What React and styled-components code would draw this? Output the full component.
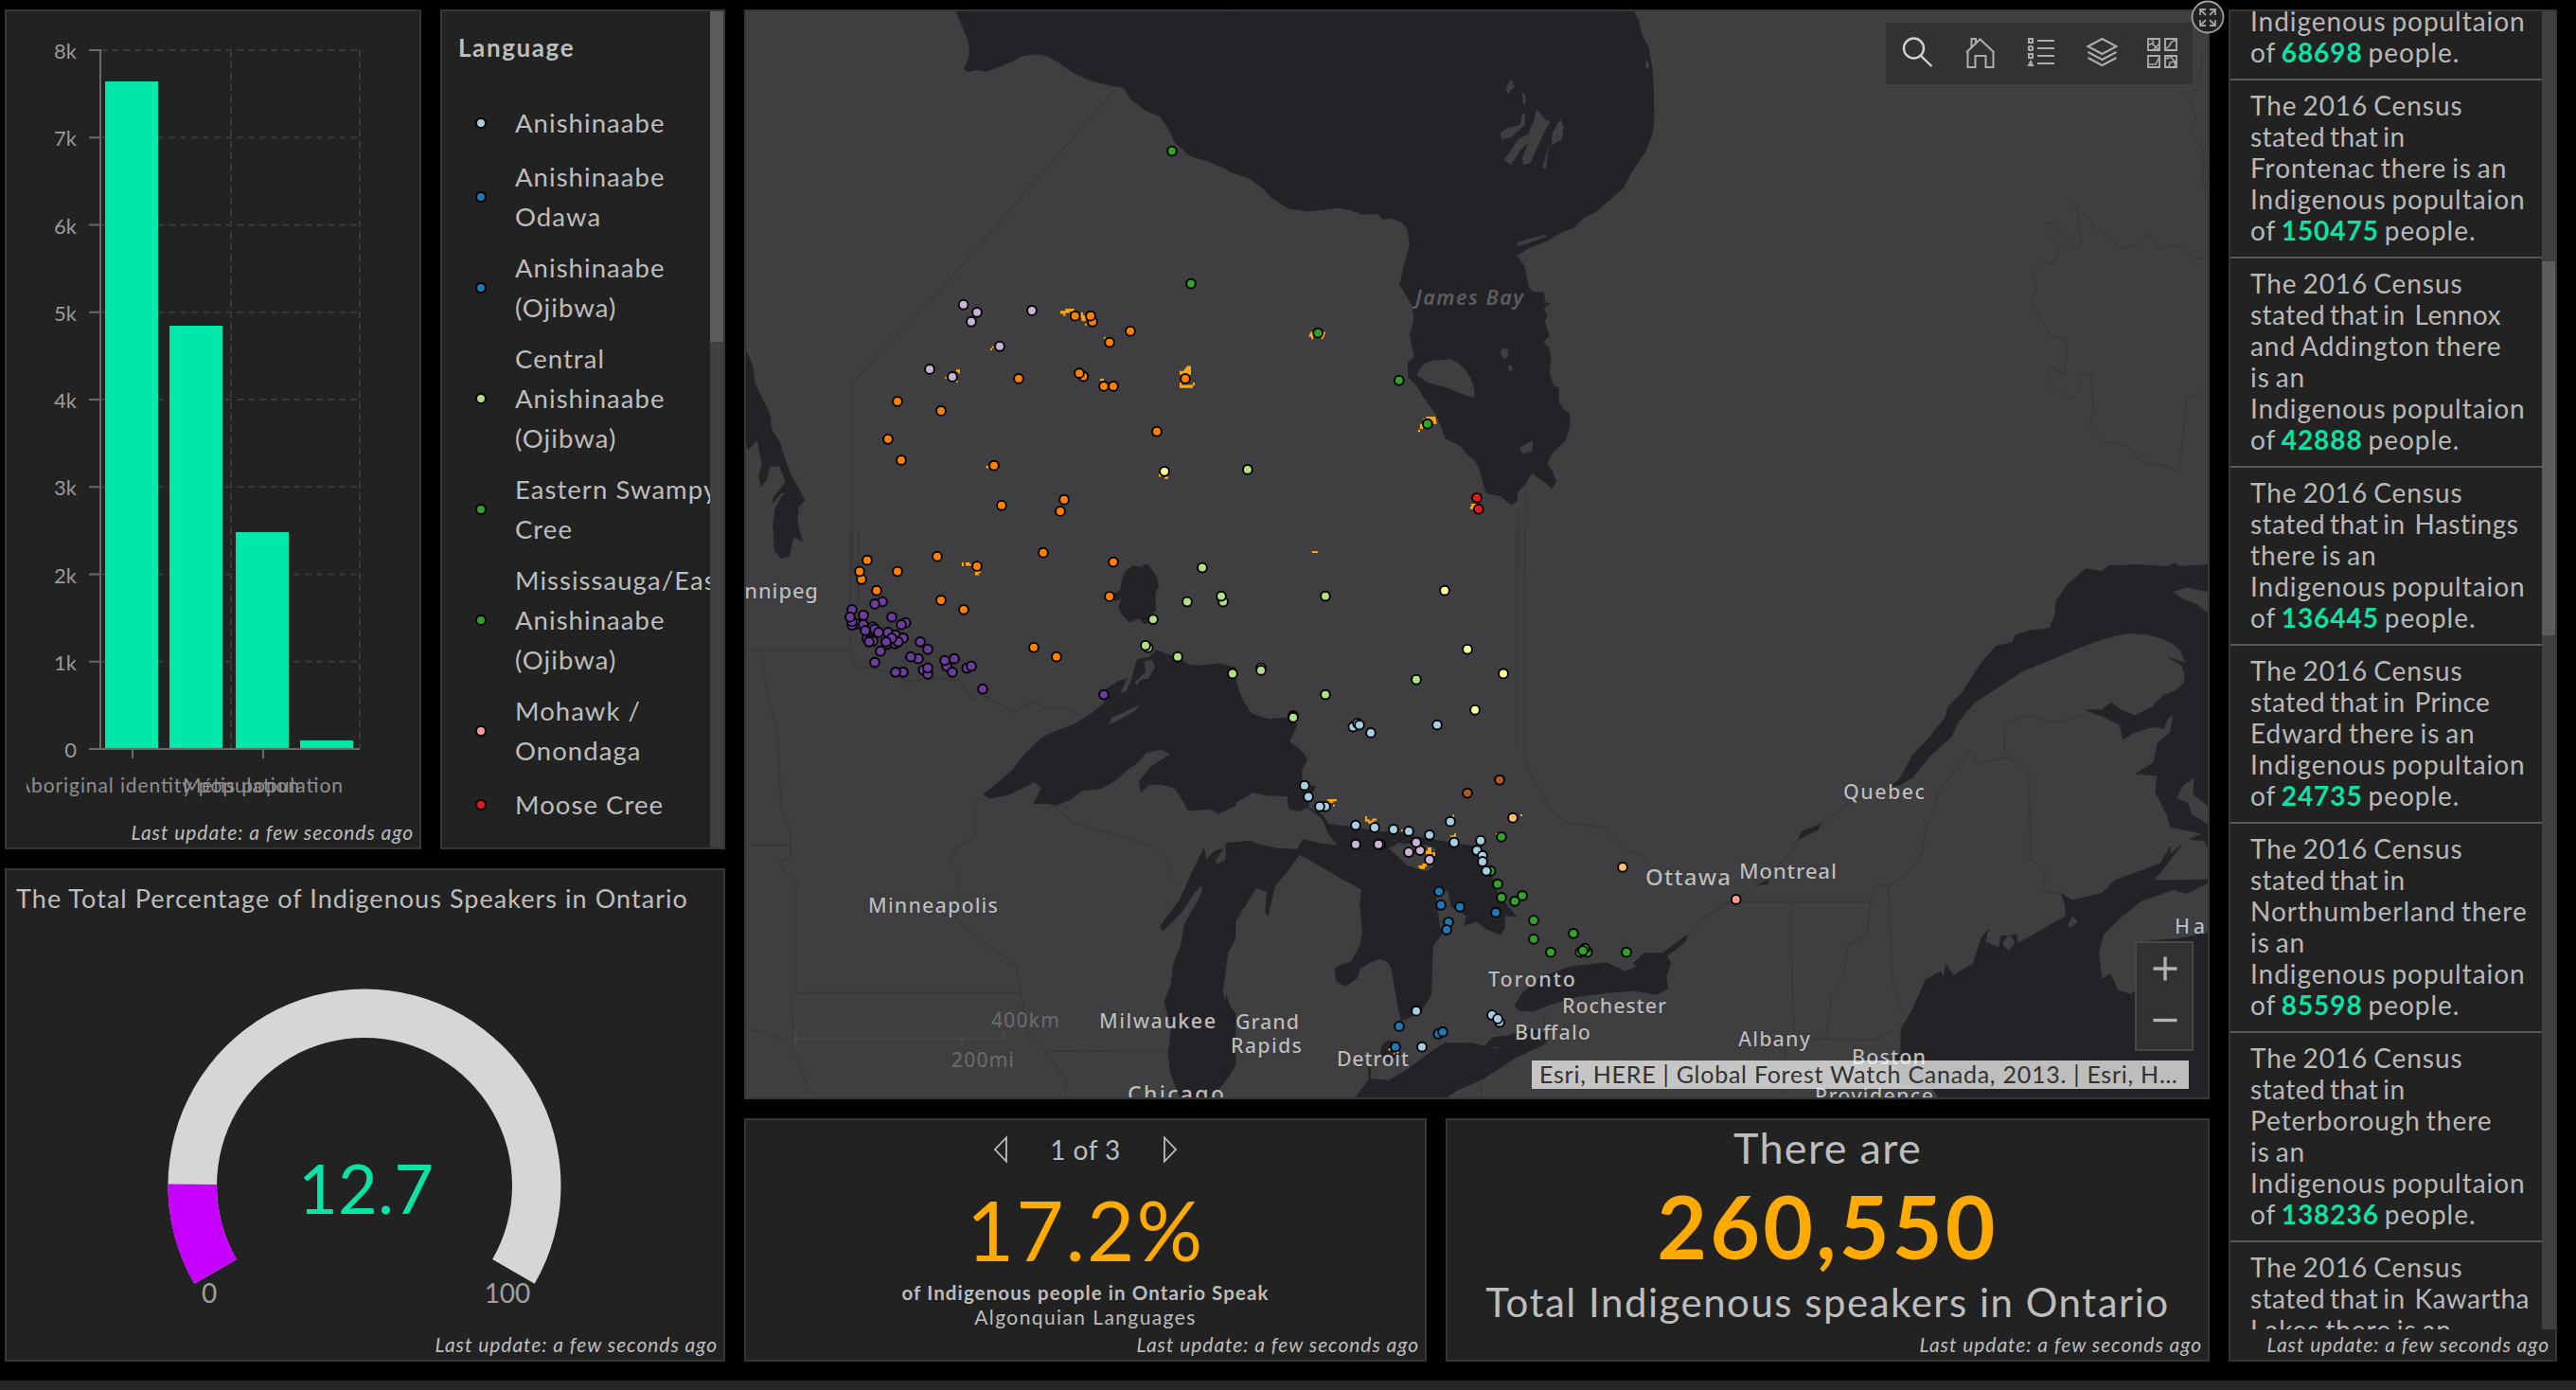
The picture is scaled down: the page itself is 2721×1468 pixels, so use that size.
import React from "react";
import styled, { createGlobalStyle } from "styled-components";

const Global = createGlobalStyle`
  * { box-sizing: border-box; }
  body { margin: 0; background: #000; color: #bdbdbd; font-family: Lato, "Open Sans", sans-serif; overflow: hidden; }
  p, h2 { margin: 0; font-weight: 400; }
`;

const Page = styled.div`
  width: 2721px;
  height: 1468px;
  display: flex;
  flex-direction: column;
  background: #000;
`;
const Board = styled.main`
  height: 1458px;
  padding: 10px 20px 20px 5px;
  display: grid;
  grid-template-columns: 761px 1548px 347px;
  gap: 20px;
`;
const BottomStrip = styled.footer`
  flex: 1;
  background: #262626;
`;
const Column = styled.div`
  display: grid;
  grid-template-rows: ${(p) => p.$rows};
  gap: 20px;
  min-height: 0;
`;
const Row = styled.div`
  display: grid;
  grid-template-columns: ${(p) => p.$cols};
  gap: ${(p) => p.$gap || 20}px;
  min-height: 0;
`;
const Panel = styled.section`
  position: relative;
  background: #222;
  border: 2px solid #363636;
  display: flex;
  flex-direction: column;
  min-width: 0;
  min-height: 0;
`;
const Updated = styled.p`
  margin-top: auto;
  padding-right: 6px;
  height: 32px;
  line-height: 32px;
  font-size: 21px;
  font-style: italic;
  letter-spacing: 0.95px;
  text-align: right;
  white-space: nowrap;
  color: #bdbdbd;
`;
const Drawing = styled.svg`
  display: block;
  flex: none;
  font-family: Lato, "Open Sans", sans-serif;
`;

/* ---------- bar chart ---------- */
const TICKS = ["0", "1k", "2k", "3k", "4k", "5k", "6k", "7k", "8k"];
const BARS = [
  [111, 86],
  [179, 344],
  [249, 562],
  [317, 782],
];
const tickY = (i) => 791 - i * 92.25;

function BarChart() {
  return (
    <Drawing width="436" height="850" viewBox="7 12 436 850">
      <g stroke="#393939" strokeWidth="2" strokeDasharray="7 5">
        {TICKS.slice(1).map((t, i) => (
          <line key={t} x1="106" x2="380" y1={tickY(i + 1)} y2={tickY(i + 1)} />
        ))}
        <line x1="244" x2="244" y1="53" y2="791" />
        <line x1="380" x2="380" y1="53" y2="791" />
      </g>
      {BARS.map(([x, y]) => (
        <rect key={x} x={x} y={y} width="56" height={791 - y} fill="#00e8a9" />
      ))}
      <path
        d="M106 52V792M94 791H380M140 791V801M278 791V801"
        stroke="#6a6a6a"
        strokeWidth="2"
        fill="none"
      />
      {TICKS.map((t, i) => (
        <g key={t}>
          <line x1="94" x2="106" y1={tickY(i)} y2={tickY(i)} stroke="#6a6a6a" strokeWidth="2" />
          <text x="81" y={tickY(i) + 9} textAnchor="end" fontSize="22" fill="#9a9a9a">
            {t}
          </text>
        </g>
      ))}
      <clipPath id="axis-clip">
        <rect x="28" y="810" width="400" height="40" />
      </clipPath>
      <g fontSize="21" fill="#8e8e8e" clipPath="url(#axis-clip)">
        <text x="18" y="837" textLength="298">Aboriginal identity population</text>
        <text x="193" y="837" textLength="169">Métis population</text>
      </g>
    </Drawing>
  );
}

/* ---------- legend ---------- */
const LANGUAGES = [
  ["#a6cee3", ["Anishinaabe"]],
  ["#1f78b4", ["Anishinaabe", "Odawa"]],
  ["#1f78b4", ["Anishinaabe", "(Ojibwa)"]],
  ["#b2df8a", ["Central", "Anishinaabe", "(Ojibwa)"]],
  ["#33a02c", ["Eastern Swampy", "Cree"]],
  ["#33a02c", ["Mississauga/Eastern", "Anishinaabe", "(Ojibwa)"]],
  ["#fb9a99", ["Mohawk /", "Onondaga"]],
  ["#e31a1c", ["Moose Cree"]],
];
const LegendBody = styled.div`
  display: flex;
  height: 100%;
`;
const LegendList = styled.div`
  width: 283px;
  overflow: hidden;
  display: flex;
  flex-direction: column;
  gap: 12px;
  padding: 18px 0 0 17px;
`;
const LegendTitle = styled.h2`
  height: 64px;
  line-height: 41px;
  font-size: 26px;
  font-weight: 700;
  letter-spacing: 1.6px;
`;
const LegendItem = styled.div`
  display: flex;
  align-items: center;
  min-height: 48px;
  flex: none;
  padding-left: 18px;
  gap: 30px;
`;
const Dot = styled.span`
  width: 12px;
  height: 12px;
  flex: none;
  border: 2px solid #000;
  border-radius: 50%;
  background: ${(p) => p.$color};
`;
const LegendText = styled.div`
  font-size: 27.5px;
  line-height: 42px;
  letter-spacing: 1.05px;
  white-space: nowrap;
`;
const Track = styled.div`
  width: 14px;
  flex: none;
  padding-top: ${(p) => p.$offset}px;
  background: #404040;
`;
const Thumb = styled.div`
  height: ${(p) => p.$size}px;
  background: #5c5c5c;
`;

/* ---------- gauge ---------- */
const GaugeTitle = styled.h2`
  padding: 10px 0 0 10px;
  height: 66px;
  line-height: 40px;
  font-size: 27px;
  letter-spacing: 1.05px;
  white-space: nowrap;
`;
const arc = (from, to) => {
  const pt = (r, deg) => {
    const a = ((180 + deg) * Math.PI) / 180;
    return `${385 + r * Math.cos(a)} ${1252 + r * Math.sin(a)}`;
  };
  const big = to - from > 180 ? 1 : 0;
  return `M${pt(207.5, from)}A207.5 207.5 0 ${big} 1 ${pt(207.5, to)}L${pt(156, to)}A156 156 0 ${big} 0 ${pt(156, from)}Z`;
};
function Gauge() {
  return (
    <Drawing width="757" height="410" viewBox="7 985 757 410">
      <path d={arc(-30, 210)} fill="#d6d6d6" />
      <path d={arc(-30, 0.4)} fill="#c500ff" />
      <text x="315" y="1282" fontSize="72" textLength="143" fill="#0be3a5">12.7</text>
      <text x="221" y="1376" fontSize="28" textAnchor="middle" fill="#a0a0a0">0</text>
      <text x="536" y="1376" fontSize="28" textAnchor="middle" fill="#a0a0a0">100</text>
    </Drawing>
  );
}

/* ---------- map ---------- */
const C = {
  w: "#cab2d6", o: "#ff7f00", g: "#33a02c", y: "#ffff99", l: "#b2df8a", p: "#6a3d9a",
  a: "#a6cee3", b: "#1f78b4", n: "#b15928", t: "#fdbf6f", r: "#e31a1c", k: "#fb9a99",
};

/* Each sheet has its own local grid; ox/oy is its origin and kx/ky its grid units per pixel. */
const SHEETS = [
  {
    id: "northwest", ox: 780, oy: 0, kx: 3, ky: 2.6133,
    water: [
      "M690 30L712 78L728 112Q736 140 730 160L716 190L724 198L755 192L785 197L820 186L870 168L900 154Q940 145 980 155L1020 175L1060 200L1110 220L1190 238L1218 240L1245 275L1290 305L1335 320L1360 350L1385 395L1430 430L1490 445L1560 472L1575 476V28Z",
      "M20 960L45 1010L52 1060L75 1100L98 1140L105 1185L130 1220L148 1270L165 1310L210 1380L190 1400L186 1440L202 1495L175 1480L160 1535L135 1541L115 1520L110 1450L118 1400L138 1370L152 1360L135 1360L108 1390L110 1375L150 1330L130 1286L100 1286L88 1325L72 1342L65 1315L75 1280L60 1215L30 1240L20 1205Z",
    ],
    land: [],
    border: ["M1195 245L900 540L630 810L360 1055V1580"],
    fire: "M1020 858h16v-6h28v8h-14v4h-14v8h-6v-6h-10zM1086 862h6v8h8v16h-12v-8h-4zM1098 893h6v5h-6zM1398 1024h12l12-14h12v24h-36zM1398 1056h6v6h36v-6h6v8h-6v7h-42zM1146 1045h12v6h-12zM690 1020h12v10h-6v-4h-6zM654 1040h5v5h-5zM690 1051h5v5h-5zM798 961h6v6h-6zM804 956h5v5h-5zM1158 930h5v5h-5zM785 1286h7v6h-7zM1332 1308h8v8h-8zM1350 1316h12v6h-12z",
    dots: {
      g: [1374,417,1434,783],
      w: [713,841,756,862,738,888,930,857,828,956,606,1019,678,1040],
      o: [1067,872,1122,888,1116,872,1242,914,1176,945,888,1045,1093,1039,1080,1030,1158,1066,1188,1066,1416,1045,504,1108,642,1134,474,1212,516,1270,1326,1191,810,1285,834,1395,1032,1379,1020,1411],
      y: [1350,1301],
    },
  },
  {
    id: "james-bay", ox: 1300, oy: 0, kx: 2.8, ky: 2.6133,
    water: [
      "M-8 28H1190L1205 55L1215 95L1235 130L1245 180L1250 240L1252 330L1245 375L1225 420L1185 475L1160 520L1110 560L1080 585L1045 600L1015 628L980 640L935 665L880 685L845 705L868 735L880 790L890 805L925 808L930 835L943 839L925 850L935 870L928 890L942 925L925 945L940 960L947 990L942 1030L955 1065L970 1070V1110L985 1130L1000 1140L1003 1175L990 1215L950 1250L935 1280L950 1300L962 1330L950 1348L935 1335L890 1305L870 1335L848 1360L845 1385L830 1393L800 1370L755 1360L735 1290L720 1270L695 1250L680 1230L635 1210L620 1170L605 1140L570 1095L555 1070L525 1040V1000L543 985L530 925L543 880L535 840L500 785L515 725L530 675L522 628L505 613L475 602L450 605L435 590L395 592L355 580L320 573L230 583L170 575L120 545L90 515L50 490L-8 472Z",
    ],
    land: [
      "M550 1035Q565 1000 600 995L650 992Q690 1005 710 1045Q722 1070 722 1098L690 1090L640 1070L580 1055Z",
      "M797 970l10-10l14 4v18l-12 10l-8-10zM820 1008l10 0l6 12l-14 6zM855 1235L893 1215V1245L862 1252Z",
      "M828 217L840 240L830 246L820 262L814 245ZM862 255L872 262V290L864 282ZM797 368L815 355L855 345L864 312L870 312V345L830 378L800 385Z",
      "M905 303L930 330L945 335L925 370L905 410L885 450L865 455L862 435L880 395L860 410L830 455L808 443L850 385L880 370L895 335ZM975 328L985 350L980 385L948 402L952 365ZM941 400L933 465L922 462ZM845 670L930 647L935 653L850 680ZM1228 165L1238 175L1236 192L1228 185Z",
    ],
    border: ["M872 1330V1580", "M850 1400V1580"],
    fire: "M230 930l6-14h8v20h-6v-6zM274 916h6l-3 12l-6 8h-4zM566 1156h12v-6h27l5 20h-12v-8h-20zM554 1186h6v-16h8v14h-8v8h-6zM711 1390h16v10h-10v5h-9v-6h3zM241 1521h17v5h-17z",
    dots: { g: [258,919,498,1050,582,1170], l: [50,1296], r: [728,1374,733,1405] },
  },
  {
    id: "quebec-north", ox: 1840, oy: 0, kx: 3, ky: 3,
    water: [], land: [], fire: "", dots: {},
    border: [
      "M1050 640L1065 680L1075 780L1060 790L1020 750L985 705L960 705L990 760L1010 790L985 840L965 830L920 860L935 920L912 950L945 1010L980 1065L1025 1080L1030 1130L1020 1185L980 1160L970 1190L980 1225L1045 1262L1065 1240L1080 1195L1105 1185L1115 1300L1100 1350L1130 1380L1155 1400L1220 1410L1260 1460L1340 1475L1385 1495L1395 1400L1410 1260L1480 1240",
      "M1085 670L1120 720L1170 750L1200 790L1250 775L1285 740L1330 790L1380 775L1440 820L1475 815",
      "M1460 170L1450 270L1415 310L1440 370L1420 420L1465 475L1460 560L1470 620",
    ],
  },
  {
    id: "superior", ox: 780, oy: 560, kx: 3, ky: 2.529,
    water: [
      "M1225 110L1250 95L1285 100L1280 92L1300 94L1325 125L1332 150L1320 170L1322 215L1300 225L1310 245L1285 250L1270 235L1240 245L1215 225L1205 205L1215 180L1195 188L1175 180L1210 160L1218 130Z",
      "M775 705L800 690L870 640L910 595L960 555L1010 535L1060 520L1110 495L1160 462L1165 425L1200 405L1230 397L1265 345L1300 340L1325 320L1370 335L1400 345L1430 360L1470 362L1520 356L1575 366V735L1520 757L1500 745L1425 748L1400 710L1385 690L1340 678L1300 680L1275 700L1270 670L1310 630L1370 598L1340 585L1290 595L1265 620L1240 635L1200 665L1150 690L1090 695L1050 720L1005 735L985 730L935 730L960 690L940 672L910 685L850 708L795 716Z",
      "M1475 850L1440 910L1400 985L1335 1060L1345 1070L1400 1025L1440 975L1462 950L1473 955L1460 985L1415 1050L1402 1110L1378 1160L1372 1210L1350 1260L1372 1330L1362 1400L1370 1450L1400 1516H1500L1540 1475L1575 1430V1290L1545 1260L1533 1235L1540 1200L1550 1130L1575 1090V858L1535 885L1515 893L1512 880L1535 852L1510 856L1482 880Z",
    ],
    land: ["M1170 520L1185 500L1270 467L1260 480L1210 505Z", "M1210 435L1232 395L1250 350L1262 345L1245 400L1230 430Z", "M1255 405L1290 380L1285 350L1310 345L1320 365L1300 395L1275 400L1262 415Z"],
    border: [
      "M355 0V320H20M380 0V200", "M75 330L90 440L125 540L135 740L165 800V870L130 885L150 920L182 940V1235", "M20 842H165M165 1236H895",
      "M355 330L380 365L440 370L540 405L620 395L700 400L740 455L760 430L870 487L940 455L960 475L1040 475L1080 495L1120 492",
      "M780 715L750 725V820L690 850L665 890L700 920L690 1040L780 1100L880 1165L895 1236L915 1340L970 1390L1040 1470L1035 1515M970 1390L1360 1392",
      "M1000 735L1060 780L1180 810L1310 845L1365 885L1370 930L1385 945", "M165 1240L180 1400L230 1510", "M20 1335L90 1340L160 1370",
    ],
    fire: "M708 86h6v10h-6zM720 86h12v4h6v5h-18zM762 82h5v5h-5zM750 110h18v4h-6v6h-12z",
    dots: {
      o: [408,80,390,131,384,110,630,70,504,110,756,96,966,60,1188,85,438,161,642,187,714,212,1176,177,936,313,1008,338],
      p: [360,212,456,191,432,197,374,250,360,253,360,244,354,232,396,252,396,227,486,232,530,247,516,252,426,258,432,264,474,273,408,289,418,292,426,296,402,268,444,273,498,280,522,288,496,303,506,298,470,305,486,288,414,298,450,323,468,298,576,298,600,318,432,353,570,343,546,338,522,379,498,379,586,373,600,384,600,368,660,363,684,343,654,348,678,379,724,368,738,363,774,424,1158,439],
      l: [1470,100,1422,191,1536,191,1530,176,1314,238,1298,313,1290,308,1392,338],
    },
  },
  {
    id: "huron", ox: 1300, oy: 560, kx: 3, ky: 2.529,
    water: [
      "M-15 366L15 400L35 450L65 490L120 505L190 500L210 520L185 565L225 590L243 612L225 640V665L235 680L270 685L250 710L245 740L215 750L185 745L180 710L120 708L70 700L30 720L-15 738Z",
      "M235 735L290 760L310 785L400 795L470 805L540 808L600 820L700 835L780 845L800 880L830 930L850 975L905 1032L868 1028L868 1062L855 1080L810 1065L780 1045L740 1055L748 1030L700 1005L690 965L655 955L650 975L660 1050L668 1080L640 1110L635 1240L600 1290L540 1310L530 1270L510 1170L495 1150L470 1145L440 1155L410 1170L400 1195L365 1218L335 1205L330 1170L350 1160L380 1155L410 1110L418 1070L410 1000L415 960L385 945L350 930L250 880L205 862L228 826L290 838L340 842L310 810L290 770Z",
      "M-15 836L60 830L90 840L150 850L215 853V870L175 915L140 950L118 1030L110 1020L115 965L80 955L40 1010L10 1050L-15 1110Z",
      "M-15 1240L5 1290L12 1370L8 1420L-15 1450Z",
      "M395 1516L440 1465L500 1470L560 1440L640 1390L680 1370L760 1370L840 1385L860 1380L805 1378L830 1355L880 1350L950 1330L1000 1345V1370L900 1410L800 1465L720 1495L680 1516Z",
      "M480 1375L500 1362L530 1370L540 1400L500 1420L475 1400ZM432 1410L444 1440L440 1470Z",
      "M900 1270L925 1235L980 1195L1080 1165L1190 1155L1250 1178L1290 1165L1275 1158L1310 1130L1370 1130L1430 1090L1447 1082L1440 1100L1380 1138L1395 1155L1380 1190L1385 1225L1350 1240L1280 1230L1200 1235L1100 1245L1000 1270L960 1285L915 1282Z",
    ],
    land: ["M500 850L530 835L620 840L650 850L640 900L620 912L560 895Z"],
    border: ["M930 0V600L950 650L1010 740L1060 780L1180 795L1250 850L1310 870L1320 895M905 0V580", "M1445 1085L1500 1035L1575 990", "M1000 1285L990 1330", "M795 1470V1515"],
    fire: "M258 56h18v5h-18zM306 718h30v6h-10v4h-14v-5h-6zM324 733h6v5h-6zM426 764h6v8h8v4h8v-6h14v6h-8v8h-18v-6h-10zM540 799h5v5h-5zM702 760h6v6h-6zM696 815h12v-6h6v10h-18zM918 759h6v5h-6zM840 809h5v5h-5zM618 856h6v-9h12v14h6v4h-24zM642 860h6v10h-6zM595 895h12v-5h14v9h-6v6h-16v-4h-4zM500 1384h6v6h-6zM516 1395h5v5h-5z",
    dots: {
      l: [300,176,96,368,96,374,6,383,588,399,300,439,198,496,198,500],
      y: [678,161,750,318,864,383,774,480],
      a: [388,525,402,516,408,520,444,541,654,520,234,682,246,712,300,738,282,738,396,788,456,794,516,799,564,804,630,814,696,778,708,834,792,829,780,855,798,869,798,885,588,1284,606,1380,828,1295,852,1314,846,1305],
      n: [852,667,750,702],
      t: [894,768,1242,900],
      w: [396,839,474,839,468,839,600,855,588,834,564,860,630,880],
      b: [660,965,666,1001,726,1006,690,1047,684,1067,840,1021,534,1325,522,1380,658,1345,672,1340],
      g: [858,819,824,910,846,945,858,981,924,976,900,991,960,1042,960,1092,1014,1127,1086,1077,1108,1127,1130,1127,1122,1117,1116,1123,1254,1127],
    },
    top: { a: [810,910] },
  },
  {
    id: "atlantic", ox: 1800, oy: 560, kx: 2.904, ky: 2.529,
    water: [
      "M575 685L600 665L640 600L690 555L740 500L750 470L790 435L850 355L895 310L945 300L955 280L1000 268L1060 262L1075 230L1080 190L1110 150L1170 103L1220 110L1240 95L1330 92L1420 97L1445 88L1460 97L1550 92V165L1480 152L1435 165L1470 185L1510 198L1550 224V738L1500 705L1505 660L1470 680L1448 715L1485 730L1495 760L1550 788V855L1535 830L1490 825L1530 810L1430 793L1420 760L1385 700L1390 655L1325 650L1380 620L1390 570L1430 540L1440 490L1420 505L1410 530L1380 525L1320 540L1285 558L1275 520L1230 500L1170 480L1220 480L1248 460L1280 480L1320 495L1370 475L1410 440Q1478 425 1475 385L1465 360L1425 340L1478 355L1460 320Q1410 275 1310 275Q1230 280 1080 340L980 375L900 420L830 460L780 510L760 550L690 605L640 660L600 680Z",
      "M603 1400L605 1330L640 1280L680 1200L725 1178L735 1195L742 1160L765 1190L800 1170L825 1160L850 1090L872 1065L862 1100L905 1115L910 1085L960 1080V1105L1060 1055L1110 1030L1108 1000L1095 970L1130 988L1220 970L1260 935L1400 890L1430 845V865L1465 840L1430 880L1380 935L1440 935L1550 933V940L1480 970L1440 960L1340 990L1270 1040L1225 1080L1210 1130L1220 1200L1245 1185L1270 1230L1310 1240L1330 1225V1100L1460 1090L1550 1075V1516H720L700 1490L600 1480L585 1400Z",
      "M290 825L300 805L355 785L350 800ZM165 947L200 932L195 945ZM590 670L580 680L610 675Z",
    ],
    land: ["M1115 1055L1130 1030L1145 1045L1125 1062Z", "M915 1105L935 1080L955 1100L935 1122Z"],
    border: [
      "M115 993H510L530 950L580 945L620 920L670 860L680 790L705 760L715 700L820 588L840 625L935 605L998 655L1000 880L1045 900V965L1095 970",
      "M920 600L925 515L1000 495L1070 515L1170 490", "M268 995L270 1210L278 1355", "M510 993L500 1080L440 1110L430 1180L390 1250L375 1355",
      "M565 950L580 1220L610 1290", "M330 1357L530 1362L590 1330", "M-6 1038L100 985L250 880L290 825L400 760L450 728L560 700", "M248 1380V1510",
    ],
    fire: "",
    dots: { k: [98,986] },
  },
];

const CITIES = [
  ["Winnipeg", 758, 632, 106, 22], ["Minneapolis", 917, 963.5, 137, 21.5], ["Milwaukee", 1161, 1085.5, 123, 21.5],
  ["Chicago", 1191, 1164, 102, 23], ["Grand", 1305, 1087, 67, 21.5], ["Rapids", 1300, 1112, 75, 21.5],
  ["Detroit", 1412, 1126, 76, 21.5], ["Toronto", 1572, 1042, 92, 21.5], ["Rochester", 1650, 1070, 110, 21.5],
  ["Buffalo", 1600, 1098, 80, 21.5], ["Ottawa", 1738, 935, 90, 24], ["Montreal", 1837, 928, 103, 22.5],
  ["Quebec", 1947, 844, 86, 21.5], ["Albany", 1836, 1104.5, 76, 21.5], ["Boston", 1956, 1124, 78, 21.5],
  ["Providence", 1917, 1165, 125, 21.5], ["Halifax", 2297, 986, 94, 21.5],
];

const Dots = ({ sheet, groups }) =>
  Object.entries(groups).map(([kind, pts]) =>
    pts
      .filter((_, i) => i % 2 === 0)
      .map((x, i) => (
        <circle
          key={`${kind}${i}`}
          cx={sheet.ox + x / sheet.kx}
          cy={sheet.oy + pts[i * 2 + 1] / sheet.ky}
          r="4.900"
          fill={C[kind]}
          stroke="#000"
          strokeWidth="1.900"
        />
      ))
  );

const place = (s) => `translate(${s.ox} ${s.oy}) scale(${1 / s.kx} ${1 / s.ky})`;

function Map() {
  return (
    <Drawing width="1544" height="1147" viewBox="788 12 1544 1147">
      <rect x="788" y="12" width="1544" height="1147" fill="#3f3f41" />
      {SHEETS.map((s) => (
        <g key={s.id} transform={place(s)}>
          {s.border.map((d) => (
            <path key={d} d={d} fill="none" stroke="#39393b" strokeWidth="5" strokeLinejoin="round" />
          ))}
          {s.water.map((d) => (
            <path key={d} d={d} fill="#232327" stroke="#232327" strokeWidth="2" strokeLinejoin="round" />
          ))}
          {s.land.map((d) => (
            <path key={d} d={d} fill="#3f3f41" />
          ))}
        </g>
      ))}
      <path d="M840 1089V1106M840 1096.500H1060V1089M1016 1097V1104" fill="none" stroke="#48484a" strokeWidth="2.500" />
      <g fontFamily='"Noto Sans", "Open Sans", sans-serif'>
        <g fill="#6c6c6d" fontSize="21">
          <text x="1047" y="1085" textLength="72">400km</text>
          <text x="1005" y="1126.500" textLength="66">200mi</text>
        </g>
        <text x="1495" y="322" fontSize="21.500" fontWeight="600" fontStyle="italic" textLength="114" fill="#5c5c60">James Bay</text>
        <g fill="#bcbcbd" stroke="#2c2c2e" strokeWidth="1" paintOrder="stroke" fontWeight="500">
          {CITIES.map(([name, x, y, w, size]) => (
            <text key={name} x={x} y={y} fontSize={size} textLength={w}>{name}</text>
          ))}
        </g>
      </g>
      {SHEETS.map((s) => (
        <g key={s.id}>
          <path d={s.fire} transform={place(s)} fill="#ffa60d" />
          <Dots sheet={s} groups={s.dots} />
          {s.top && <Dots sheet={s} groups={s.top} />}
        </g>
      ))}
    </Drawing>
  );
}

const MapTools = styled.div`
  position: absolute;
  top: 12px;
  right: 16px;
  width: 324px;
  height: 65px;
  padding-left: 1px;
  display: flex;
  background: #323232;
`;
const ToolIcon = styled.svg`
  width: 64px;
  height: 65px;
  flex: none;
  fill: none;
  stroke: ${(p) => (p.$bright ? "#d2d2d2" : "#adadad")};
  stroke-width: ${(p) => p.$weight || 2};
`;
const Expand = styled.svg`
  position: absolute;
  top: -13px;
  right: -18px;
  width: 36px;
  height: 38px;
  fill: none;
  stroke: #a0a0a0;
  stroke-width: 1.8;
`;
const ZoomBox = styled.div`
  position: absolute;
  right: 15px;
  top: 982px;
  width: 62px;
  height: 116px;
  border: 2px solid #474747;
  background: #313131;
  display: flex;
  flex-direction: column;
  align-items: center;
`;
const ZoomIcon = styled.svg`
  width: 58px;
  height: 56px;
  flex: none;
  stroke: #b2b2b2;
  stroke-width: 3.4;
  fill: none;
`;
const Attribution = styled.div`
  position: absolute;
  right: 20px;
  top: 1108px;
  width: 694px;
  height: 30px;
  padding-left: 8px;
  line-height: 29px;
  font-size: 25px;
  letter-spacing: 0.75px;
  white-space: nowrap;
  color: #323232;
  background: rgba(255, 255, 255, 0.7);
`;

function Toolbar() {
  return (
    <MapTools>
      <ToolIcon $bright $weight={2.4} viewBox="0 0 64 65">
        <circle cx="28.500" cy="27" r="10.500" />
        <path d="M36 35L47.500 46" />
      </ToolIcon>
      <ToolIcon viewBox="0 0 64 65">
        <path d="M20 31.500L34.500 17.500L49.500 31.500M21.500 30.500V47H29.500V35H40.500V47H48.500V30.500M25.500 26V17H30V21.500" />
      </ToolIcon>
      <ToolIcon viewBox="0 0 64 65">
        <path strokeWidth="2.200" d="M31 19H49M31 27H49M31 35H49M31 43H49" />
        <path d="M22 17h4v4h-4zM22 33h4v4h-4zM24 41l2 4h-4z" />
        <circle cx="24" cy="27" r="2.200" />
      </ToolIcon>
      <ToolIcon viewBox="0 0 64 65">
        <path d="M20.500 25L35.500 17L50.500 25L35.500 33ZM20.500 31L35.500 39L50.500 31M20.500 37L35.500 45L50.500 37" />
      </ToolIcon>
      <ToolIcon $weight={1.8} viewBox="0 0 64 65">
        <path d="M20 17h12v12h-12zM38 17h12v12h-12zM20 35h12v12h-12zM38 35h12v12h-12z" />
        <path strokeWidth="1.500" d="M20 24L24 22L32 29M24 17L26 22M32 22L26 28M38 28L42 25L45 20L50 18M20 44H28L32 36M43 35L50 43M38 38L43 37M42 47L43 42L47 41L49 45L46 47Z" />
      </ToolIcon>
    </MapTools>
  );
}

/* ---------- indicators ---------- */
const Centered = styled.div`
  display: flex;
  flex-direction: column;
  align-items: center;
  white-space: nowrap;
`;
const Pager = styled.div`
  display: flex;
  align-items: center;
  justify-content: center;
  gap: 44px;
  height: 50px;
  margin: 6px 0;
  font-size: 28px;
  letter-spacing: 0.5px;
`;
const Arrow = styled.svg`
  width: 16px;
  height: 30px;
  fill: none;
  stroke: #bdbdbd;
  stroke-width: 1.8;
  transform: ${(p) => (p.$flip ? "scaleX(-1)" : "none")};
`;
const Line = styled.p`
  height: ${(p) => p.$h}px;
  line-height: ${(p) => p.$h}px;
  font-size: ${(p) => p.$size}px;
  letter-spacing: ${(p) => p.$track || 0}px;
  font-weight: ${(p) => p.$weight || 400};
  color: ${(p) => p.$color || "#bdbdbd"};
`;

/* ---------- census list ---------- */
const CENSUS = [
  [[], "68698"],
  [["The 2016 Census", "stated that in", "Frontenac there is an"], "150475"],
  [["The 2016 Census", "stated that in  Lennox", "and Addington there", "is an"], "42888"],
  [["The 2016 Census", "stated that in  Hastings", "there is an"], "136445"],
  [["The 2016 Census", "stated that in  Prince", "Edward there is an"], "24735"],
  [["The 2016 Census", "stated that in", "Northumberland there", "is an"], "85598"],
  [["The 2016 Census", "stated that in", "Peterborough there", "is an"], "138236"],
];
const ListBody = styled.div`
  display: flex;
  height: 1392px;
  overflow: hidden;
`;
const Items = styled.div`
  width: 329px;
  flex: none;
  margin-top: ${(p) => p.$shift}px;
`;
const Item = styled.div`
  padding: ${(p) => (p.$cut ? 0 : 9.5)}px 0 11.5px 21px;
  border-bottom: 2px solid #585858;
  font-size: 28px;
  line-height: 33px;
  letter-spacing: 0.95px;
  word-spacing: -2.2px;
  white-space: pre;
  color: #b8b8b8;
`;
const Tight = styled.div`
  letter-spacing: 0.45px;
  word-spacing: -2.6px;
`;
const Count = styled.b`
  color: #0be3a5;
`;
const CensusLine = ({ children }) =>
  children.startsWith("stated") ? <Tight>{children}</Tight> : <div>{children}</div>;

export default function App() {
  return (
    <Page>
      <Global />
      <Board>
        <Column $rows="887px 521px">
          <Row $cols="440px 301px">
            <Panel>
              <BarChart />
              <Updated>Last update: a few seconds ago</Updated>
            </Panel>
            <Panel>
              <LegendBody>
                <LegendList>
                  <LegendTitle>Language</LegendTitle>
                  {LANGUAGES.map(([color, lines]) => (
                    <LegendItem key={lines.join()}>
                      <Dot $color={color} />
                      <LegendText>
                        {lines.map((l) => (
                          <div key={l}>{l}</div>
                        ))}
                      </LegendText>
                    </LegendItem>
                  ))}
                </LegendList>
                <Track $offset={0}>
                  <Thumb $size={349} />
                </Track>
              </LegendBody>
            </Panel>
          </Row>
          <Panel>
            <GaugeTitle>The Total Percentage of Indigenous Speakers in Ontario</GaugeTitle>
            <Gauge />
            <Updated>Last update: a few seconds ago</Updated>
          </Panel>
        </Column>

        <Column $rows="1151px 257px">
          <Panel>
            <Map />
            <Toolbar />
            <Expand viewBox="0 0 36 38">
              <circle cx="18" cy="19" r="16.500" fill="#222" />
              <path d="M10 17V11H16M10 11L16 17M20 11H26V17M26 11L20 17M10 22V28H16M10 28L16 22M26 22V28H20M26 28L20 22" />
            </Expand>
            <ZoomBox>
              <ZoomIcon viewBox="0 0 58 56"><path d="M17.500 27H42.500M30 14.500V39.500" /></ZoomIcon>
              <ZoomIcon viewBox="0 0 58 56"><path d="M17.500 25.500H42.500" /></ZoomIcon>
            </ZoomBox>
            <Attribution>Esri, HERE | Global Forest Watch Canada, 2013. | Esri, H…</Attribution>
          </Panel>
          <Row $cols="721px 807px">
            <Panel>
              <Centered>
                <Pager>
                  <Arrow viewBox="0 0 16 30"><path d="M14 2.500V27.500L2 15Z" /></Arrow>
                  <span>1 of 3</span>
                  <Arrow $flip viewBox="0 0 16 30"><path d="M14 2.500V27.500L2 15Z" /></Arrow>
                </Pager>
                <Line $h={107} $size={87} $track={2} $color="#ffaa00">17.2%</Line>
                <Line $h={26} $size={20.5} $weight={700} $track={1.1}>of Indigenous people in Ontario Speak</Line>
                <Line $h={26} $size={21} $track={1.4}>Algonquian Languages</Line>
              </Centered>
              <Updated>Last update: a few seconds ago</Updated>
            </Panel>
            <Panel>
              <Centered>
                <Line $h={59} $size={45} $track={1.3}>There are</Line>
                <Line $h={105} $size={91} $weight={700} $track={3.2} $color="#ffaa00">260,550</Line>
                <Line $h={57} $size={42} $track={1.5}>Total Indigenous speakers in Ontario</Line>
              </Centered>
              <Updated>Last update: a few seconds ago</Updated>
            </Panel>
          </Row>
        </Column>

        <Panel>
          <ListBody>
            <Items $shift={-6.5}>
              {CENSUS.map(([lines, count], i) => (
                <Item key={count} $cut={i === 0}>
                  {lines.map((l) => (
                    <CensusLine key={l}>{l}</CensusLine>
                  ))}
                  <div>Indigenous popultaion</div>
                  <div>of <Count>{count}</Count> people.</div>
                </Item>
              ))}
              <Item>
                <CensusLine>The 2016 Census</CensusLine>
                <CensusLine>stated that in  Kawartha</CensusLine>
                <CensusLine>Lakes there is an</CensusLine>
              </Item>
            </Items>
            <Track $offset={264}>
              <Thumb $size={395} />
            </Track>
          </ListBody>
          <Updated>Last update: a few seconds ago</Updated>
        </Panel>
      </Board>
      <BottomStrip />
    </Page>
  );
}
